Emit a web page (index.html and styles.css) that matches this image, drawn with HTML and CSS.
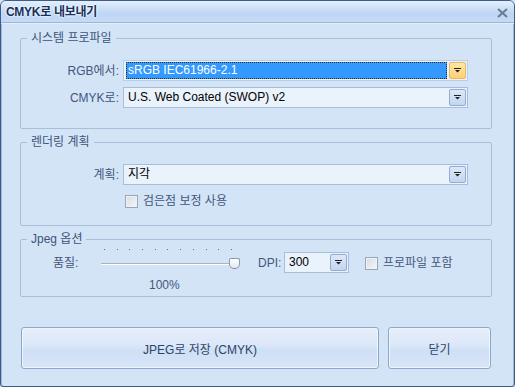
FILE: index.html
```html
<!DOCTYPE html>
<html lang="ko">
<head>
    <meta charset="UTF-8">
    <title>CMYK로 내보내기</title>
    <link rel="stylesheet" href="styles.css">
</head>
<body>
    <div class="window">
        <div class="titlebar">
            <span class="title">CMYK로 내보내기</span>
            <span class="close">
                <svg width="11" height="10" viewBox="0 0 11 10"><path d="M1 1 L10 9 M10 1 L1 9" stroke="#6b7b94" stroke-width="2"/></svg>
            </span>
        </div>

        <div class="content">
            <fieldset class="group">
                <legend>시스템 프로파일</legend>
                <div class="rows">
                    <div class="row">
                        <label class="lbl">RGB에서:</label>
                        <div class="combo focused">
                            <span class="combo-text">sRGB IEC61966-2.1</span>
                            <span class="drop">
                                <svg width="7" height="5" viewBox="0 0 7 5"><path d="M0 0 H7 V1 H0 Z M1 2 H6 L3.5 4.5 Z" fill="#222"/></svg>
                            </span>
                        </div>
                    </div>
                    <div class="row">
                        <label class="lbl">CMYK로:</label>
                        <div class="combo">
                            <span class="combo-text">U.S. Web Coated (SWOP) v2</span>
                            <span class="drop">
                                <svg width="7" height="5" viewBox="0 0 7 5"><path d="M0 0 H7 V1 H0 Z M1 2 H6 L3.5 4.5 Z" fill="#222"/></svg>
                            </span>
                        </div>
                    </div>
                </div>
            </fieldset>

            <fieldset class="group render">
                <legend>렌더링 계획</legend>
                <div class="rows">
                    <div class="row">
                        <label class="lbl">계획:</label>
                        <div class="combo">
                            <span class="combo-text">지각</span>
                            <span class="drop">
                                <svg width="7" height="5" viewBox="0 0 7 5"><path d="M0 0 H7 V1 H0 Z M1 2 H6 L3.5 4.5 Z" fill="#222"/></svg>
                            </span>
                        </div>
                    </div>
                    <div class="check-row">
                        <span class="checkbox"></span>
                        <span class="check-text">검은점 보정 사용</span>
                    </div>
                </div>
            </fieldset>

            <fieldset class="group jpeg">
                <legend>Jpeg 옵션</legend>
                <div class="jpeg-row">
                    <label class="lbl quality-lbl">품질:</label>
                    <div class="slider">
                        <div class="ticks">
                            <i></i><i></i><i></i><i></i><i></i><i></i><i></i><i></i><i></i><i></i><i></i>
                        </div>
                        <div class="track"></div>
                        <div class="thumb"></div>
                    </div>
                    <label class="lbl dpi-lbl">DPI:</label>
                    <div class="combo small">
                        <span class="combo-text">300</span>
                        <span class="drop">
                            <svg width="7" height="5" viewBox="0 0 7 5"><path d="M0 0 H7 V1 H0 Z M1 2 H6 L3.5 4.5 Z" fill="#222"/></svg>
                        </span>
                    </div>
                    <div class="check-row inline">
                        <span class="checkbox"></span>
                        <span class="check-text">프로파일 포함</span>
                    </div>
                </div>
                <div class="quality-value">100%</div>
            </fieldset>

            <div class="buttons">
                <button class="btn btn-save">JPEG로 저장 (CMYK)</button>
                <button class="btn btn-close">닫기</button>
            </div>
        </div>
    </div>
</body>
</html>
```

FILE: styles.css
```css
* {
    margin: 0;
    padding: 0;
    box-sizing: border-box;
}

body {
    font-family: 'Liberation Sans', 'Noto Sans CJK KR', sans-serif;
    font-size: 12px;
    line-height: 14px;
    background: #d4e4f7;
}

.window {
    width: 515px;
    height: 387px;
    background: #d4e4f7;
    border: 1px solid #3d5c88;
    border-radius: 6px 6px 3px 3px;
    box-shadow: inset 1px 0 0 #9fb8da, inset -1px 0 0 #9fb8da;
    overflow: hidden;
}

.titlebar {
    height: 22px;
    display: flex;
    align-items: center;
    justify-content: space-between;
    padding: 0 6px 0 5px;
    background: linear-gradient(to bottom, #e5effc 0%, #d0e2f8 30%, #bed5f4 60%, #c6daf6 100%);
    border-bottom: 1px solid #9cb5d8;
    box-shadow: 0 1px 0 #e6eefa;
}

.title {
    font-weight: bold;
    color: #16305a;
    text-shadow: 0 0 3px #ffffff, 0 0 2px #ffffff;
    letter-spacing: -0.3px;
}

.close {
    display: flex;
    margin-top: 2px;
}

.content {
    padding: 8px 22px 0 19px;
}

.group {
    border: 1px solid #a9bfd9;
    border-radius: 2px;
    width: 472px;
}

.group + .group {
    margin-top: 6px;
}

.group legend {
    margin-left: 6px;
    padding: 0 4px;
    line-height: 14px;
    color: #3c5479;
    font-size: 12px;
}

.rows {
    display: flex;
    flex-direction: column;
    gap: 6px;
    padding: 15px 0 20px;
}

.row {
    display: flex;
    align-items: center;
    gap: 4px;
}

.lbl {
    color: #41577b;
}

.row .lbl {
    width: 98px;
    text-align: right;
}

.combo {
    width: 345px;
    height: 21px;
    display: flex;
    align-items: center;
    justify-content: space-between;
    padding: 0 1px 0 2px;
    background: #eaf2fc;
    border: 1px solid #a7bdd9;
}

.combo-text {
    flex: 1;
    height: 17px;
    line-height: 15px;
    padding-left: 1px;
    color: #000000;
    border: 1px solid transparent;
}

.combo.focused {
    border-color: #b9cde8;
}

.combo.focused .combo-text {
    background: #3399ff;
    color: #ffffff;
    border: 1px dotted #3a2a10;
    margin-right: 2px;
}

.drop {
    width: 17px;
    height: 17px;
    display: flex;
    align-items: center;
    justify-content: center;
    background: linear-gradient(to bottom, #dde8f7, #c3d6f0);
    border: 1px solid #8fadd6;
    border-radius: 2px;
}

.focused .drop {
    background: linear-gradient(to bottom, #ffe7a6, #ffcf73);
    border-color: #e3b868;
}

.render .rows {
    gap: 9px;
    padding-bottom: 17px;
}

.check-row {
    display: flex;
    align-items: center;
    gap: 5px;
    padding-left: 104px;
    color: #41577b;
}

.checkbox {
    width: 13px;
    height: 13px;
    border: 1px solid #9aa6b6;
    background: linear-gradient(to bottom right, #d8dde4, #f4f6f8);
    box-shadow: inset 0 0 0 1px #eef1f5;
}

.jpeg-row {
    display: flex;
    align-items: flex-start;
    padding: 1px 0 0 32px;
}

.quality-lbl {
    margin-top: 9px;
    width: 48px;
}

.slider {
    position: relative;
    width: 140px;
    height: 24px;
}

.ticks {
    display: flex;
    justify-content: space-between;
    width: 128px;
    margin: 2px 0 0 3px;
}

.ticks i {
    width: 1px;
    height: 1px;
    background: #666f7c;
}

.track {
    margin-top: 13px;
    width: 130px;
    height: 2px;
    border-top: 1px solid #a9b4c2;
    border-bottom: 1px solid #ffffff;
}

.thumb {
    position: absolute;
    left: 128px;
    top: 11px;
    width: 11px;
    height: 11px;
    background: linear-gradient(to bottom, #ffffff, #e2e8f0);
    border: 1px solid #8d9bb0;
    border-radius: 2px 2px 5px 5px;
    border-bottom-color: #9a7ab8;
}

.dpi-lbl {
    margin: 9px 0 0 17px;
    width: 26px;
}

.combo.small {
    width: 65px;
    height: 21px;
    margin-top: 5px;
}

.check-row.inline {
    padding-left: 0;
    margin: 9px 0 0 16px;
}

.quality-value {
    margin: 5px 0 0 128px;
    padding-bottom: 4px;
    color: #41577b;
}

.buttons {
    display: flex;
    gap: 9px;
    margin-top: 30px;
    padding-left: 1px;
}

.btn {
    height: 42px;
    font-family: 'Liberation Sans', 'Noto Sans CJK KR', sans-serif;
    font-size: 12px;
    color: #2c4569;
    background: linear-gradient(to bottom, #e6eefb 0%, #dbe7f8 45%, #cfdff5 55%, #d7e5f8 100%);
    border: 1px solid #8ea8cd;
    border-radius: 3px;
    box-shadow: inset 0 0 0 1px #eef4fd;
}

.btn-save {
    width: 358px;
}

.btn-close {
    width: 103px;
}
```
